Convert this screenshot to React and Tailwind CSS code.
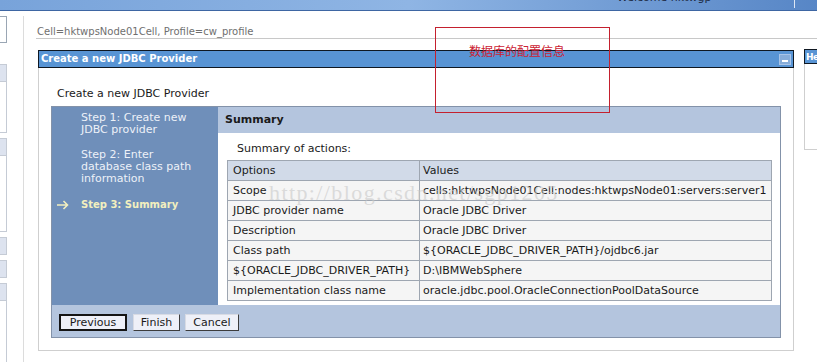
import React from "react";

const rows = [
  ["Scope", "cells:hktwpsNode01Cell:nodes:hktwpsNode01:servers:server1"],
  ["JDBC provider name", "Oracle JDBC Driver"],
  ["Description", "Oracle JDBC Driver"],
  ["Class path", "${ORACLE_JDBC_DRIVER_PATH}/ojdbc6.jar"],
  ["${ORACLE_JDBC_DRIVER_PATH}", "D:\\IBMWebSphere"],
  ["Implementation class name", "oracle.jdbc.pool.OracleConnectionPoolDataSource"],
];

export default function App() {
  return (
    <div className="relative w-[817px] h-[362px] overflow-hidden bg-white font-['DejaVu_Sans',sans-serif] text-[#1a1a1a]">
      {/* top bar */}
      <div className="h-[11px] border-b border-[#3e66a3] bg-linear-to-r from-[#78a3da] via-[#8fb5e4] to-[#5786c6] flex overflow-hidden">
        <div className="ml-[617px] -mt-[8px] text-[11px] leading-[12px] text-[#1d2b44] whitespace-nowrap">Welcome hktwgp</div>
        <div className="ml-auto mr-[22px] w-px h-[8px] bg-white/80"></div>
      </div>

      <div className="flex">
        {/* left sidebar */}
        <div className="w-[7px] flex flex-col pt-[5px] shrink-0">
          <div className="h-[27px] border border-l-0 border-[#9aa6b4] bg-white"></div>
          <div className="mt-[21px] h-[69px] border border-l-0 border-[#c5cbd5]">
            <div className="h-[17px] bg-[#dde3ef] border-b border-[#c5cbd5]"></div>
          </div>
          <div className="mt-[5px] h-[94px] border border-l-0 border-[#c5cbd5]">
            <div className="h-[17px] bg-[#dde3ef] border-b border-[#c5cbd5]"></div>
          </div>
          <div className="mt-[5px] h-[18px] bg-[#dde3ef] border border-l-0 border-[#c5cbd5]"></div>
          <div className="mt-[5px] h-[18px] bg-[#dde3ef] border border-l-0 border-[#c5cbd5]"></div>
          <div className="mt-[5px] h-[18px] bg-[#dde3ef] border border-l-0 border-[#c5cbd5]"></div>
          <div className="h-[70px] border-r border-[#c5cbd5]"></div>
        </div>

        {/* vertical rule */}
        <div className="ml-[16px] mt-[5px] w-px h-[347px] bg-[#dcdcdc] shrink-0"></div>

        {/* main content */}
        <div className="flex-1 pl-[12px] pt-[5px]">
          <div className="pt-[10px] border-b border-[#c8c8c8] text-[10px] leading-[12px] text-[#6f6f6f] pl-px">
            Cell=hktwpsNode01Cell, Profile=cw_profile
          </div>

          <div className="flex items-start">
            {/* panel */}
            <div className="ml-[2px] mt-[11px] w-[756px] shrink-0">
              <div className="h-[18px] border border-[#0f1822] bg-[#5894d4] flex items-center pl-[2px] pr-[2px]">
                <span className="text-white font-bold text-[10px] leading-[12px]">Create a new JDBC Provider</span>
                <div className="ml-auto w-[12px] h-[11px] bg-[#86acd9] border border-[#a8c4e8] flex items-end justify-center pb-[2px]">
                  <div className="w-[6px] h-[2px] bg-white"></div>
                </div>
              </div>
              <div className="border-x border-b border-[#cfcfcf] px-[12px] pb-[12px]">
                <div className="pt-[19px] pl-[6px] text-[11px] leading-[14px] mb-[5px]">Create a new JDBC Provider</div>

                {/* wizard */}
                <div className="border border-[#8392a9]">
                  <div className="flex h-[198px]">
                    <div className="w-[166px] bg-[#6f8fba] pl-[29px] pt-[5px] text-[11px] leading-[12px] text-[#edf1f8]">
                      <div>Step 1: Create new<br />JDBC provider</div>
                      <div className="mt-[13px]">Step 2: Enter<br />database class path<br />information</div>
                      <div className="mt-[14px] -ml-[25px] flex items-center">
                        <svg width="13" height="10" viewBox="0 0 13 10" className="shrink-0">
                          <path d="M1 5 H11.5 M7.5 1 L11.5 5 L7.5 9" stroke="#f3efbf" strokeWidth="1.6" fill="none" />
                        </svg>
                        <span className="ml-[12px] font-bold text-[10px] text-[#f3efbf]">Step 3: Summary</span>
                      </div>
                    </div>
                    <div className="flex-1 bg-white">
                      <div className="h-[26px] bg-[#b4c5de] flex items-center pl-[7px] font-bold text-[11px]">Summary</div>
                      <div className="pt-[10px] pl-[19px] text-[11px] leading-[12px]">Summary of actions:</div>
                      <table className="ml-[9px] mt-[5px] w-[545px] border-collapse text-[11px] leading-[12px]">
                        <tbody>
                          <tr className="h-[20px] bg-[#d1dae8]">
                            <td className="w-[192px] border border-[#9ea6b1] pl-[5px] p-0">Options</td>
                            <td className="border border-[#9ea6b1] pl-[3px] p-0">Values</td>
                          </tr>
                          {rows.map(([a, b]) => (
                            <tr key={a} className="h-[20px] bg-[#f5f5f5]">
                              <td className="border border-[#9ea6b1] pl-[5px] p-0 whitespace-nowrap">{a}</td>
                              <td className="border border-[#9ea6b1] pl-[3px] p-0 whitespace-nowrap">{b}</td>
                            </tr>
                          ))}
                        </tbody>
                      </table>
                    </div>
                  </div>
                  <div className="h-[32px] bg-[#b4c5de] flex items-start pl-[7px] pt-[9px] text-[11px]">
                    <button className="w-[68px] h-[17px] bg-[#eef0f8] border-2 border-[#151515] leading-[12px] flex items-center justify-center">Previous</button>
                    <button className="ml-[6px] w-[47px] h-[17px] bg-[#eef0f8] border border-t-[#d8dbe4] border-l-[#d8dbe4] border-r-[#3c3c3c] border-b-[#3c3c3c] leading-[12px] flex items-center justify-center">Finish</button>
                    <button className="ml-[5px] w-[54px] h-[17px] bg-[#eef0f8] border border-t-[#d8dbe4] border-l-[#d8dbe4] border-r-[#3c3c3c] border-b-[#3c3c3c] leading-[12px] flex items-center justify-center">Cancel</button>
                  </div>
                </div>
              </div>
            </div>

            {/* help panel */}
            <div className="ml-[10px] mt-[10px] w-[40px] shrink-0">
              <div className="h-[15px] border border-[#0f1822] bg-[#5894d4] flex items-center pl-px">
                <span className="text-white font-bold text-[9px] leading-[12px] tracking-[-0.5px] whitespace-nowrap">He</span>
              </div>
              <div className="h-[86px] border-l border-b border-[#cfcfcf]"></div>
            </div>
          </div>
        </div>
      </div>

      {/* annotation overlay */}
      <div className="absolute left-[435px] top-[27px] w-[175px] h-[86px] border border-[#c4202e] pointer-events-none"></div>
      <div className="absolute left-[469px] top-[44px] text-[12px] leading-[14px] text-[#cc2233] font-['Noto_Sans_CJK_SC',sans-serif] pointer-events-none whitespace-nowrap">数据库的配置信息</div>

      {/* watermark */}
      <div className="absolute left-[269px] top-[182px] text-[22px] leading-[22px] tracking-[1.4px] text-[#c8c8c8]/60 font-['Liberation_Serif',serif] pointer-events-none whitespace-nowrap">http://blog.csdn.net/sgp1205</div>
    </div>
  );
}
